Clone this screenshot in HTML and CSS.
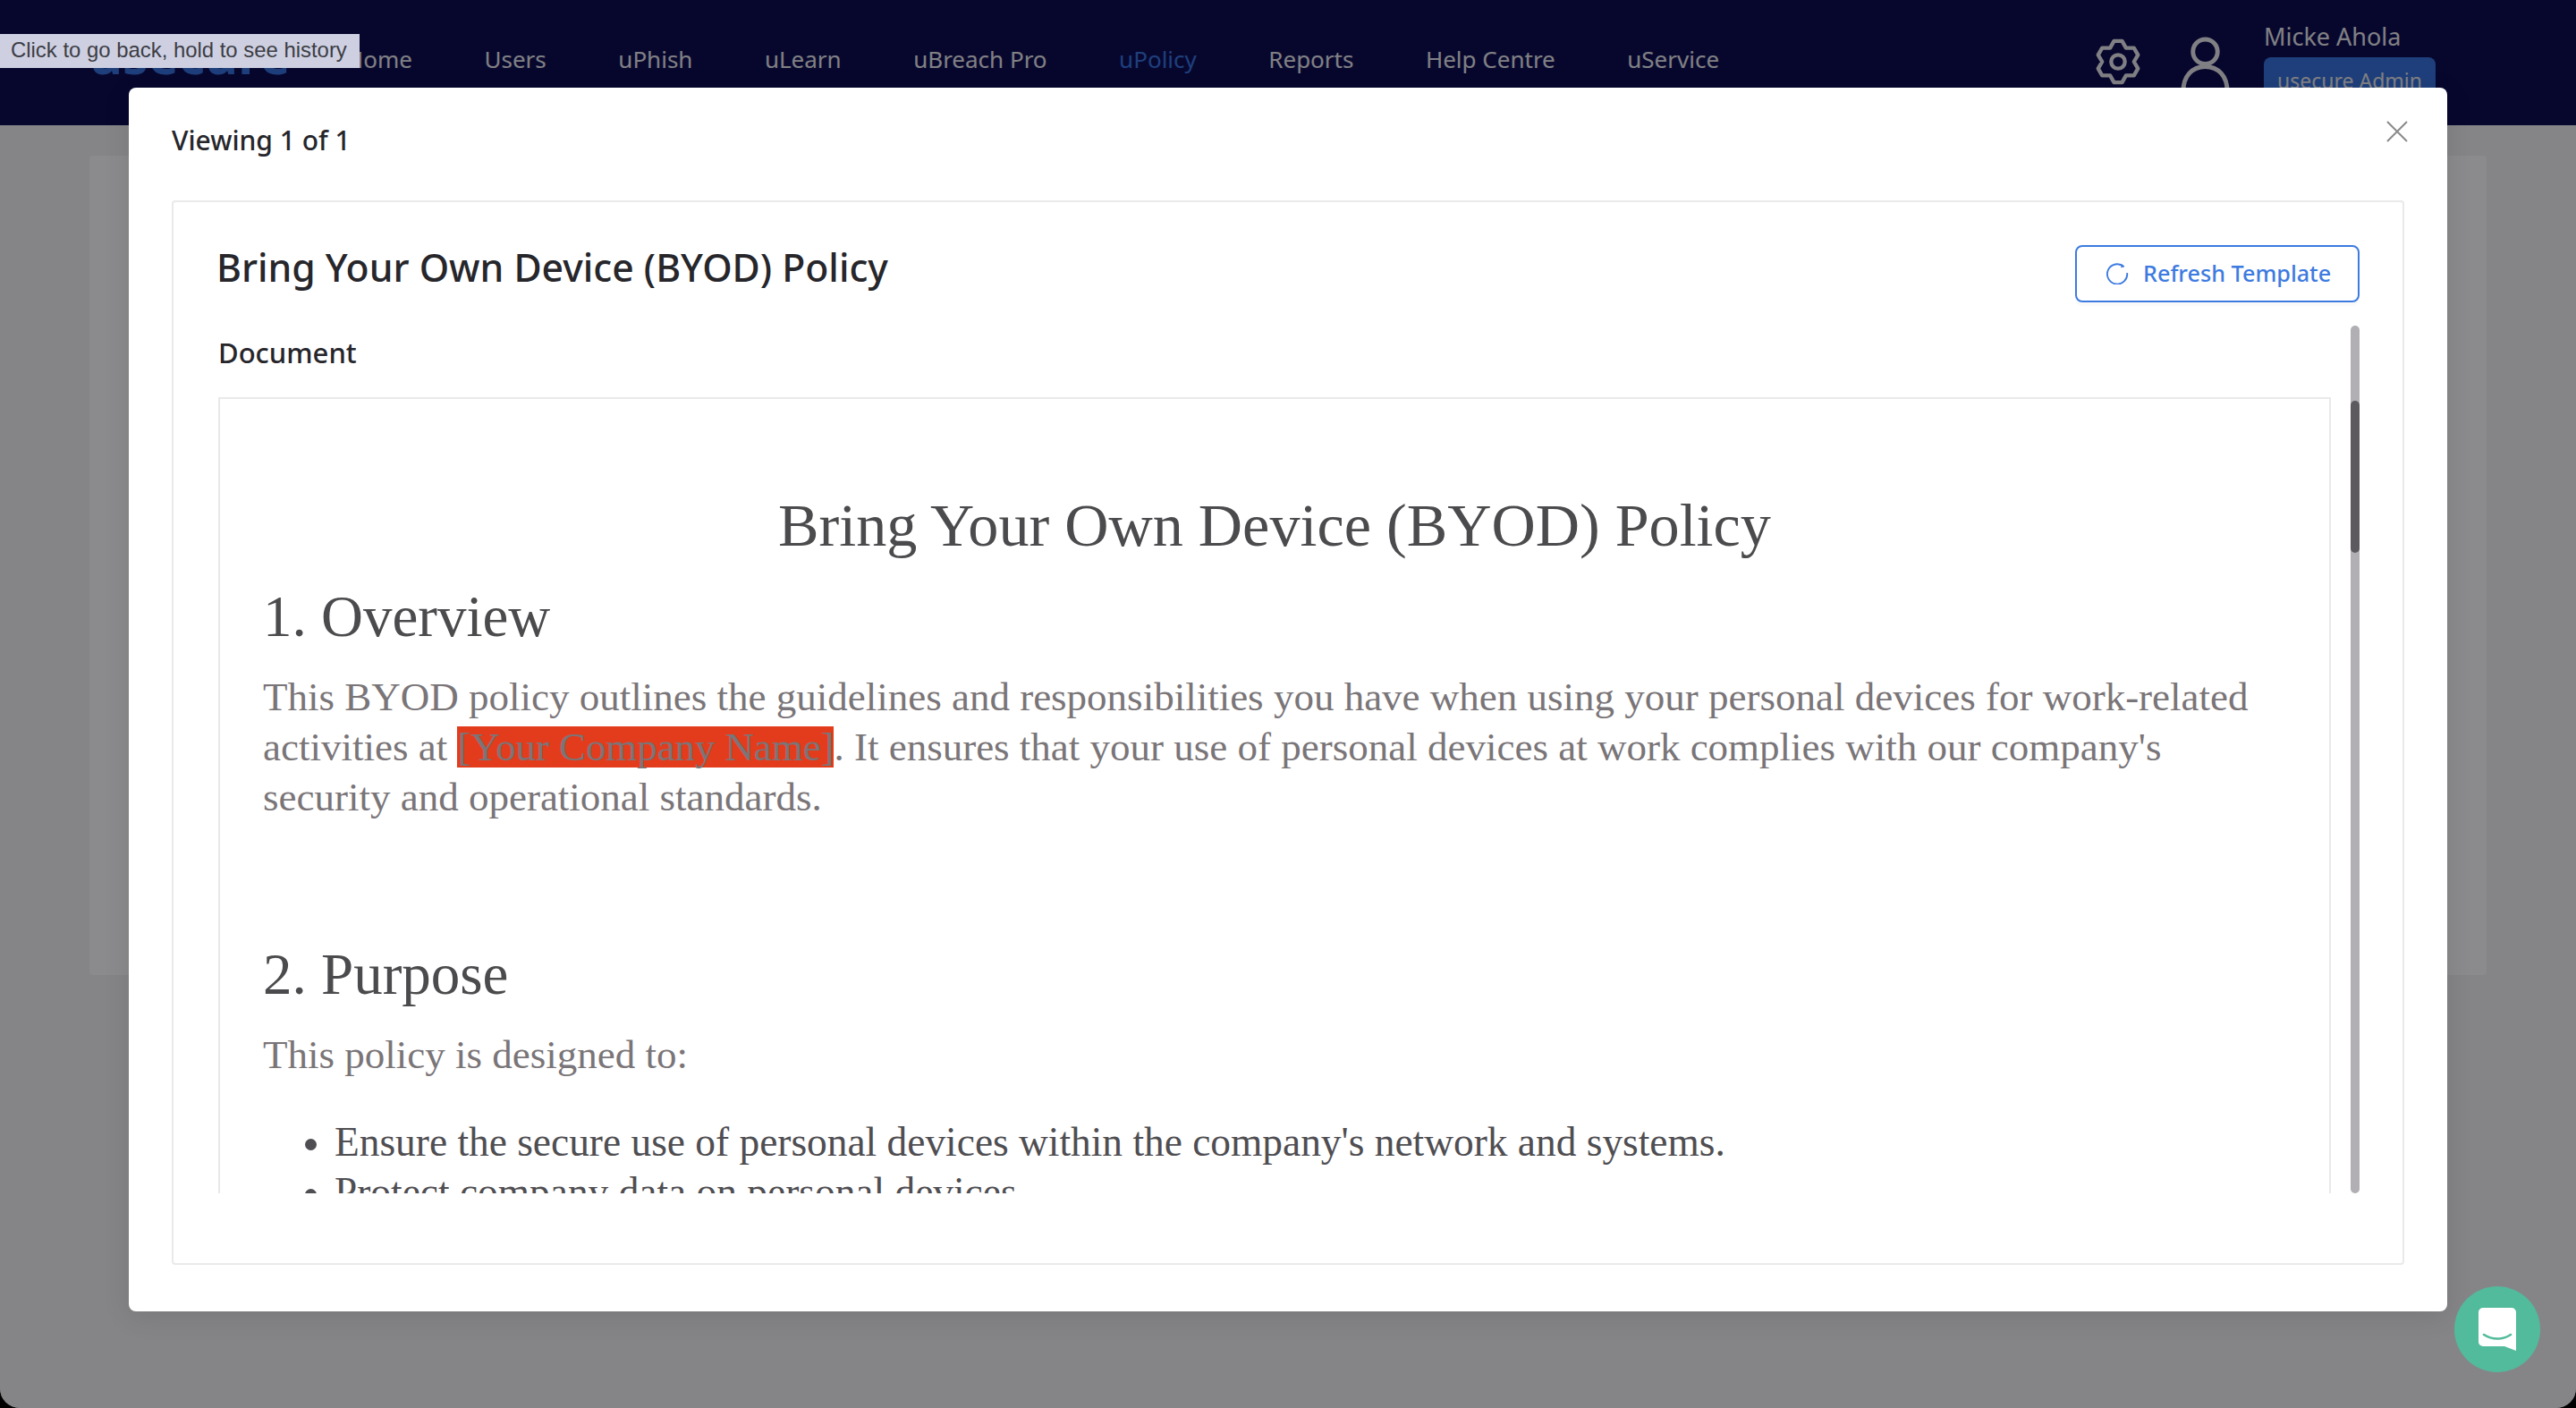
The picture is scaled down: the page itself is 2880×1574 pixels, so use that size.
FILE: index.html
```html
<!DOCTYPE html>
<html lang="en">
<head>
<meta charset="utf-8">
<title>uPolicy</title>
<link rel="stylesheet" href="styles.css">
</head>
<body>
<div class="app">
  <header class="nav">
    <div class="logo">usecure</div>
    <nav class="links">
      <a>Home</a><a>Users</a><a>uPhish</a><a>uLearn</a><a>uBreach Pro</a><a class="active">uPolicy</a><a>Reports</a><a>Help Centre</a><a>uService</a>
    </nav>
    <div class="account">
      <svg class="gear" viewBox="0 0 52 54" fill="none" stroke="currentColor" stroke-width="4.5" stroke-linejoin="round"><circle cx="26" cy="27" r="8"/><path d="M21.3 3h9.4l4.55 8 9.25-.07 4.66 8.09L44.5 27l4.66 7.98-4.66 8.09-9.25-.05-4.55 8.03h-9.4l-4.55-8.03-9.25.05-4.66-8.09L7.5 27l-4.66-7.98L7.5 10.93l9.25.05z"/></svg>
      <svg class="user" viewBox="0 0 56 64" fill="none" stroke="currentColor" stroke-width="5"><circle cx="28" cy="17" r="14"/><path d="M3 62c0-17 10-28 25-28s25 11 25 28"/></svg>
      <div class="who">
        <div class="name">Micke Ahola</div>
        <div class="badge">usecure Admin</div>
      </div>
    </div>
  </header>
  <main class="page"><div class="panel"></div></main>
</div>

<div class="mask"></div>

<section class="modal">
  <div class="modal-head">
    <span class="viewing">Viewing 1 of 1</span>
    <svg class="close" viewBox="0 0 24 24" fill="none" stroke="currentColor" stroke-width="2"><path d="M1 1l22 22M23 1L1 23"/></svg>
  </div>
  <div class="card">
    <div class="card-head">
      <h2 class="card-title">Bring Your Own Device (BYOD) Policy</h2>
      <button class="refresh">
        <svg viewBox="0 0 28 28" fill="none" stroke="currentColor" stroke-width="2"><path d="M22 6.5A12 12 0 1 0 26 14"/><path d="M19.5 3.5l3.5 3.2-4.6 1.2z" fill="currentColor" stroke="none"/></svg>
        <span>Refresh Template</span>
      </button>
    </div>
    <div class="scroller">
      <div class="scroll-body">
        <div class="doc-label">Document</div>
        <article class="doc">
          <h1>Bring Your Own Device (BYOD) Policy</h1>
          <h2>1. Overview</h2>
          <p>This BYOD policy outlines the guidelines and responsibilities you have when using your personal devices for work-related activities at <mark>[Your Company Name]</mark>. It ensures that your use of personal devices at work complies with our company's security and operational standards.</p>
          <div class="spacer"></div>
          <h2>2. Purpose</h2>
          <p>This policy is designed to:</p>
          <ul>
            <li>Ensure the secure use of personal devices within the company's network and systems.</li>
            <li>Protect company data on personal devices.</li>
          </ul>
        </article>
      </div>
      <div class="track"><div class="thumb"></div></div>
    </div>
  </div>
</section>

<div class="tooltip">Click to go back, hold to see history</div>

<button class="chat" aria-label="Chat">
  <svg viewBox="0 0 42 48" fill="#fff"><path d="M5 0h32a5 5 0 0 1 5 5v43l-13-5H5a5 5 0 0 1-5-5V5a5 5 0 0 1 5-5z"/><path d="M6 30c9 6 21 6 30 0" fill="none" stroke="#52bb9b" stroke-width="2.6" stroke-linecap="round"/></svg>
</button>
</body>
</html>
```
FILE: styles.css
```css
* { box-sizing: border-box; }
html, body { margin: 0; height: 100%; }
body {
  width: 2880px;
  height: 1574px;
  overflow: hidden;
  position: relative;
  background: #000;
  font-family: "Noto Sans", "Open Sans", sans-serif;
}
.app {
  height: 100%;
  display: flex;
  flex-direction: column;
  background: #f3f2f7;
  border-radius: 0 0 22px 22px;
  overflow: hidden;
}
.nav {
  height: 140px;
  flex: none;
  display: flex;
  align-items: flex-start;
  padding-left: 100px;
  background: #0d0d55;
  color: #e9e9f0;
}
.logo {
  width: 287px;
  margin-top: 26px;
  font: 700 57px/70px "Noto Sans", sans-serif;
  color: #3874e0;
}
.links {
  display: flex;
  gap: 80.5px;
  margin-top: 47px;
  font-size: 26px;
  line-height: 38px;
}
.links .active { color: #3874e0; }
.account {
  margin-left: auto;
  display: flex;
  align-items: flex-start;
  width: 540px;
  color: #e9e9f0;
}
.gear { width: 50px; height: 52px; margin: 43px 0 0 3px; }
.user { width: 55px; height: 63px; margin: 41px 0 0 45px; }
.who { margin-left: 38px; }
.name { font-size: 27px; line-height: 38px; margin-top: 22px; }
.badge {
  width: 192px;
  height: 60px;
  margin-top: 4px;
  border-radius: 8px;
  background: #3874e0;
  font-size: 23px;
  line-height: 40px;
  padding-top: 6px;
  text-align: center;
  white-space: nowrap;
}
.page { flex: 1; padding: 34px 100px 0; }
.panel { height: 916px; background: #fefcff; border-radius: 4px; }
.mask {
  position: absolute;
  inset: 0;
  background: rgba(0, 0, 0, .45);
  border-radius: 0 0 22px 22px;
}
.modal {
  position: absolute;
  left: 144px;
  top: 98px;
  width: 2592px;
  height: 1368px;
  padding: 0 48px;
  background: #fff;
  border-radius: 8px;
  box-shadow: 0 6px 30px rgba(0, 0, 0, .1);
  display: flex;
  flex-direction: column;
}
.modal-head {
  height: 126px;
  flex: none;
  display: flex;
  justify-content: space-between;
  align-items: flex-start;
}
.viewing {
  margin-top: 38px;
  font-size: 30px;
  line-height: 42px;
  font-weight: 500;
  color: #26262b;
}
.close { width: 24px; height: 24px; margin: 37px -4px 0 0; color: #8a8a8a; }
.card {
  height: 1190px;
  border: 2px solid #e9e9e9;
  border-radius: 4px;
  padding: 48px 48px 0;
}
.card-head { display: flex; justify-content: space-between; align-items: flex-start; }
.card-title {
  margin: 0;
  font-size: 42.7px;
  line-height: 50px;
  font-weight: 500;
  color: #26262b;
}
.refresh {
  width: 318px;
  height: 64px;
  display: flex;
  align-items: center;
  gap: 16px;
  padding: 0 0 2px 32px;
  background: #fff;
  border: 2px solid #3d7be0;
  border-radius: 8px;
  color: #3d7be0;
  font: 500 25.2px/34px "Noto Sans", sans-serif;
  box-shadow: 0 4px 0 rgba(0, 0, 0, .02);
}
.refresh svg { width: 26px; height: 26px; flex: none; }
.scroller {
  position: relative;
  height: 970px;
  margin-top: 26px;
  overflow: hidden;
}
.scroll-body { padding: 0 32px 0 2px; }
.doc-label {
  height: 80px;
  padding-top: 9px;
  font-size: 31px;
  line-height: 42px;
  font-weight: 500;
  color: #26262b;
}
.doc {
  border: 2px solid #e9e9e9;
  padding: 99px 48px 0;
  font-family: "Liberation Serif", "Noto Serif", serif;
  color: #4b4a4d;
}
.doc h1, .doc h2 { margin: 0; font-weight: 400; }
.doc h1 { text-align: center; font-size: 68.2px; line-height: 84px; }
.doc h2 { font-size: 65px; line-height: 76px; margin-top: 22px; }
.doc p { margin: 24px 0 0; font-size: 45px; line-height: 56px; color: #7a7578; }
.doc mark {
  display: inline-block;
  height: 46px;
  line-height: 46px;
  background: #e33c1d;
  color: #7a7578;
  letter-spacing: -.1px;
}
.spacer { height: 110px; }
.doc ul { margin: 42px 0 0; padding-left: 80px; font-size: 45.4px; line-height: 56px; color: #4f4e52; }
.track {
  position: absolute;
  right: 0;
  top: 0;
  bottom: 0;
  width: 10px;
  border-radius: 5px;
  background: #b1afb3;
}
.thumb {
  position: absolute;
  left: 0;
  top: 84px;
  width: 10px;
  height: 170px;
  border-radius: 5px;
  background: #5c5a5e;
}
.tooltip {
  position: absolute;
  left: 0;
  top: 38px;
  width: 402px;
  height: 38px;
  padding-left: 12px;
  background: #ced0e2;
  color: #3d3d44;
  font: 23.9px/36px "Liberation Sans", sans-serif;
  white-space: nowrap;
}
.chat {
  position: absolute;
  left: 2744px;
  top: 1438px;
  width: 96px;
  height: 96px;
  padding: 0;
  display: flex;
  align-items: center;
  justify-content: center;
  border: 0;
  border-radius: 50%;
  background: #52bb9b;
}
.chat svg { width: 42px; height: 48px; }
```
